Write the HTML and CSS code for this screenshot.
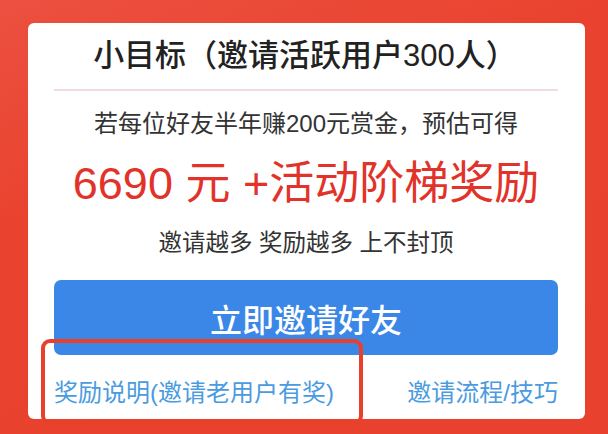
FILE: index.html
```html
<!DOCTYPE html>
<html lang="zh-CN">
<head>
<meta charset="utf-8">
<title>邀请好友</title>
<link rel="stylesheet" href="styles.css">
</head>
<body>
<div class="page">
  <div class="card">
    <div class="title">小目标（邀请活跃用户300人）</div>
    <div class="sep"></div>
    <div class="desc">若每位好友半年赚200元赏金，预估可得</div>
    <div class="amount">6690 元 +活动阶梯奖励</div>
    <div class="slogan">邀请越多 奖励越多 上不封顶</div>
    <div class="btn">立即邀请好友</div>
    <div class="links">
      <span class="link">奖励说明(邀请老用户有奖)</span>
      <span class="link">邀请流程/技巧</span>
    </div>
  </div>
  <div class="highlight"></div>
</div>
</body>
</html>
```

FILE: styles.css
```css
html, body {
  margin: 0;
  padding: 0;
}
body {
  width: 608px;
  height: 434px;
  overflow: hidden;
  background: linear-gradient(160deg, #ec5040 0%, #e9432f 35%, #e8412e 100%);
  font-family: "Liberation Sans", "Noto Sans CJK SC", sans-serif;
}
.page {
  position: relative;
  padding: 23px 23px 15px 28px;
}
.card {
  background: #fff;
  border-radius: 6px;
  height: 396px;
  box-sizing: border-box;
  padding: 0 27px 0 26px;
  display: flex;
  flex-direction: column;
}
.title {
  height: 66px;
  line-height: 66px;
  text-align: center;
  font-size: 31px;
  font-weight: 500;
  color: #222;
  padding-right: 2px;
}
.sep {
  height: 2px;
  background: #f1dcdf;
}
.desc {
  margin-top: 18px;
  line-height: 30px;
  font-size: 24px;
  color: #333;
  text-align: center;
}
.amount {
  margin-top: 20px;
  line-height: 50px;
  font-size: 45px;
  color: #e2332a;
  text-align: center;
}
.slogan {
  margin-top: 19px;
  line-height: 30px;
  font-size: 23.5px;
  color: #333;
  text-align: center;
}
.btn {
  margin-top: 22px;
  height: 75px;
  border-radius: 7px;
  background: #3a87e8;
  color: #fff;
  font-size: 32px;
  font-weight: 500;
  display: flex;
  align-items: center;
  justify-content: center;
}
.links {
  height: 58px;
  padding-top: 6px;
  display: flex;
  align-items: center;
  justify-content: space-between;
}
.link {
  font-size: 24px;
  color: #4a9be0;
}
.highlight {
  position: absolute;
  left: 41px;
  top: 339px;
  width: 322px;
  height: 86px;
  box-sizing: border-box;
  border: 4px solid #e8402b;
  border-radius: 9px;
}
```
